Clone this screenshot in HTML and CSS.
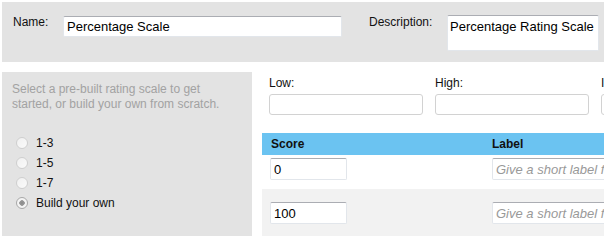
FILE: index.html
```html
<!DOCTYPE html>
<html lang="en">
<head>
    <meta charset="UTF-8">
    <title>Rating Scale</title>
    <link rel="stylesheet" href="styles.css">
</head>
<body>
    <div class="page">
        <div class="top-panel">
            <label class="field-label name-label">Name:</label>
            <input class="text-box name-input" type="text" value="Percentage Scale">
            <label class="field-label desc-label">Description:</label>
            <textarea class="text-box desc-input">Percentage Rating Scale</textarea>
        </div>

        <div class="main">
            <div class="side-panel">
                <p class="hint">Select a pre-built rating scale to get started, or build your own from scratch.</p>
                <label class="choice"><input type="radio" name="preset"> 1-3</label>
                <label class="choice"><input type="radio" name="preset"> 1-5</label>
                <label class="choice"><input type="radio" name="preset"> 1-7</label>
                <label class="choice"><input type="radio" name="preset" checked> Build your own</label>
            </div>

            <div class="content">
                <div class="range-fields">
                    <div class="range-field">
                        <label class="field-label">Low:</label>
                        <input class="text-box range-input" type="text">
                    </div>
                    <div class="range-field">
                        <label class="field-label">High:</label>
                        <input class="text-box range-input" type="text">
                    </div>
                    <div class="range-field">
                        <label class="field-label">Increment:</label>
                        <input class="text-box range-input" type="text">
                    </div>
                </div>

                <div class="score-table">
                    <div class="table-head">
                        <div class="col-score">Score</div>
                        <div class="col-label">Label</div>
                    </div>
                    <div class="table-row first">
                        <div class="col-score"><input class="text-box score-input" type="text" value="0"></div>
                        <div class="col-label"><input class="text-box label-input" type="text" placeholder="Give a short label for this score"></div>
                    </div>
                    <div class="table-row alt">
                        <div class="col-score"><input class="text-box score-input" type="text" value="100"></div>
                        <div class="col-label"><input class="text-box label-input" type="text" placeholder="Give a short label for this score"></div>
                    </div>
                </div>
            </div>
        </div>
    </div>
</body>
</html>
```

FILE: styles.css
```css
html, body {
    margin: 0;
    padding: 0;
    overflow: hidden;
    background-color: #fff;
}

body {
    font-family: "Liberation Sans", Arial, sans-serif;
    font-size: 12px;
    color: #111;
}

.page {
    width: 760px;
    padding: 2px 0 0 2px;
}

.top-panel {
    display: flex;
    align-items: flex-start;
    height: 60px;
    box-sizing: border-box;
    padding: 12px 0 0 11px;
    background-color: #e3e3e3;
}

.field-label {
    line-height: 16px;
    color: #111;
}

.name-label {
    width: 50px;
}

.desc-label {
    width: 78px;
    margin-left: 27px;
}

.text-box {
    box-sizing: border-box;
    margin: 0;
    padding: 0 3px;
    font-family: "Liberation Sans", Arial, sans-serif;
    font-size: 13px;
    color: #000;
    background-color: #fff;
    border: 1px solid #e2e6eb;
    border-top-color: #abadb3;
    border-radius: 2px;
    outline: none;
}

.name-input {
    width: 279px;
    height: 21px;
    margin-top: 2px;
}

.desc-input {
    width: 152px;
    height: 36px;
    margin-top: 1px;
    padding: 3px 2px;
    resize: none;
    overflow: hidden;
    line-height: 15px;
}

.main {
    display: flex;
    align-items: flex-start;
    margin-top: 10px;
}

.side-panel {
    width: 250px;
    height: 170px;
    box-sizing: border-box;
    padding: 10px 10px 0 10px;
    background-color: #e3e3e3;
}

.hint {
    margin: 0 0 21px 0;
    line-height: 15px;
    color: #a2a2a2;
}

.choice {
    display: flex;
    align-items: center;
    height: 20px;
    padding-left: 4px;
    color: #111;
}

.choice input {
    appearance: none;
    -webkit-appearance: none;
    width: 12px;
    height: 12px;
    margin: 0 8px 0 0;
    border: 1px solid #cfcfcf;
    border-radius: 50%;
    background: linear-gradient(135deg, #f0f0f0, #fafafa);
    box-sizing: border-box;
}

.choice input:checked {
    border-color: #a8a8a8;
    background: radial-gradient(circle, #8a8a8a 0, #9a9a9a 2.5px, #f4f4f4 3px);
}

.content {
    margin-left: 10px;
    flex: 1;
}

.range-fields {
    display: flex;
    gap: 12px;
    padding: 3px 0 0 7px;
}

.range-field {
    display: flex;
    flex-direction: column;
    width: 154px;
    flex-shrink: 0;
}

.range-field .field-label {
    margin-bottom: 3px;
}

.range-input {
    height: 21px;
    border-color: #d2d2d2;
    border-radius: 3px;
}

.score-table {
    margin-top: 18px;
}

.table-head {
    display: flex;
    align-items: center;
    height: 22px;
    background-color: #6bc3f1;
    font-weight: bold;
    color: #111;
}

.table-head .col-score {
    padding-left: 9px;
}

.table-row {
    display: flex;
}

.table-row.first {
    padding: 3px 0 9px 0;
}

.table-row.alt {
    padding: 13px 0 14px 0;
    background-color: #f2f2f2;
}

.col-score {
    width: 230px;
    box-sizing: border-box;
    padding-left: 8px;
}

.score-input {
    width: 77px;
    height: 22px;
}

.label-input {
    width: 220px;
    height: 22px;
}

.label-input::placeholder {
    font-style: italic;
    color: #999;
}
```
